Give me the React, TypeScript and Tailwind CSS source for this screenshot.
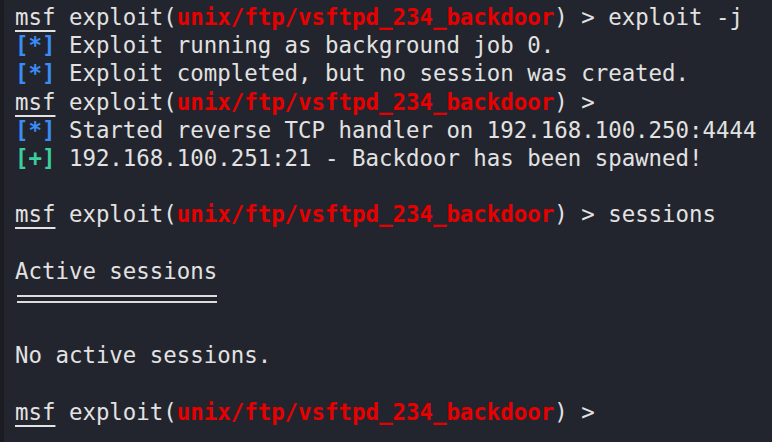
import React from "react";

const Prompt = ({ tail }: { tail?: string }) => (
  <div className="h-[28.2px] whitespace-pre">
    <span className="underline underline-offset-[5px] decoration-[1.5px]">msf</span>
    <span> exploit(</span>
    <span className="font-bold text-[#e80000]">unix/ftp/vsftpd_234_backdoor</span>
    <span>) &gt;{tail ? " " + tail : ""}</span>
  </div>
);

const Line = ({ children }: { children?: React.ReactNode }) => (
  <div className="h-[28.2px] whitespace-pre">{children}</div>
);

export default function App() {
  return (
    <div className="w-[772px] h-[442px] overflow-hidden bg-[#23252e] flex">
      <div className="w-[4px] bg-[#1b1c22]" />
      <div
        className="pl-[11px] pt-[3px] text-[#e2e2e2] text-[22.4px] leading-[28.2px]"
        style={{ fontFamily: '"DejaVu Sans Mono", "Liberation Mono", monospace' }}
      >
        <Prompt tail="exploit -j" />
        <Line>
          <span className="text-[#3a8cf7] font-bold">[*]</span> Exploit running as background job 0.
        </Line>
        <Line>
          <span className="text-[#3a8cf7] font-bold">[*]</span> Exploit completed, but no session was created.
        </Line>
        <Prompt />
        <Line>
          <span className="text-[#3a8cf7] font-bold">[*]</span> Started reverse TCP handler on 192.168.100.250:4444
        </Line>
        <Line>
          <span className="text-[#3ccf9e] font-bold">[+]</span> 192.168.100.251:21 - Backdoor has been spawned!
        </Line>
        <Line />
        <Prompt tail="sessions" />
        <Line />
        <Line>Active sessions</Line>
        <div className="h-[28.2px] pt-[10px]">
          <div className="w-[200px] h-[8px] ml-[2px] border-t-2 border-b-2 border-[#dcdcdc]" />
        </div>
        <Line />
        <Line>No active sessions.</Line>
        <Line />
        <Prompt />
      </div>
    </div>
  );
}
